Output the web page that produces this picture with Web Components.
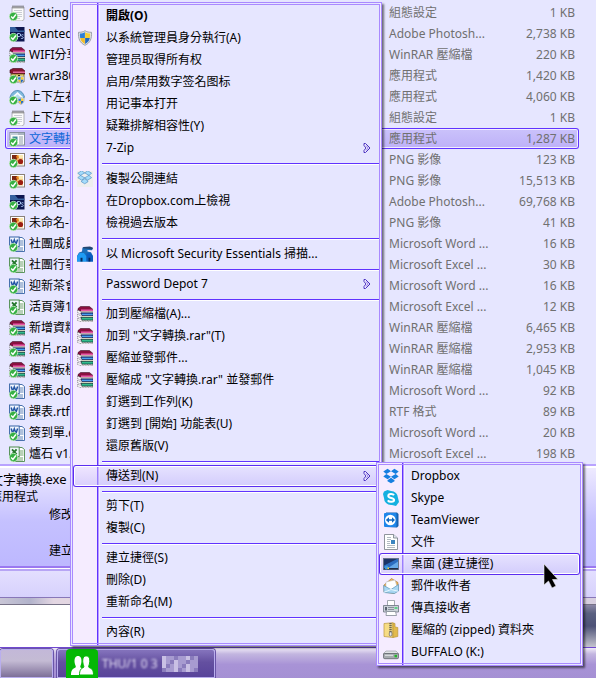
<!DOCTYPE html>
<html lang="zh-Hant">
<head>
<meta charset="utf-8">
<title>檔案總管</title>
<style>
html,body{margin:0;height:100%}
body{font:12px/22px "Noto Sans","Noto Sans CJK TC",sans-serif;color:#000;background:#e6e6ff;overflow:hidden;
--face:#e6e6ff;--edge:#a98aff;--line:#6033ff;--gutter:24px}
</style>
</head>
<body>
<desktop-screen></desktop-screen>
<script>
const TICK='<circle cx="4.500" cy="11.500" r="4.200" fill="#36b044" stroke="#d4f3d0" stroke-width=".7"/><path d="M2.200 11.600l1.700 1.800 3-3.900" fill="none" stroke="#fff" stroke-width="1.500"/>';
const RAR='<path d="M1 2.500L3.500.5h9l3.500 3v2H4L1 4z" fill="#8a0f40" stroke="#2a0614" stroke-width=".5"/><path d="M4 3.500h12v1.500H4z" fill="#e858a8"/><path d="M.5 4.200v2.300l3.500 1.600V5.600z" fill="#fff" stroke="#333" stroke-width=".5" stroke-dasharray="1 .6"/><path d="M4 5.400h12v1H4z" fill="#f0ecdc"/><path d="M4 6.800h12v3H5z" fill="#153a86" stroke="#08132c" stroke-width=".5"/><path d="M5 7.700h10.800v1.300H5z" fill="#4ba0f0"/><path d="M.5 8.300v2.300L4 12.200V9.800z" fill="#fff" stroke="#333" stroke-width=".5" stroke-dasharray="1 .6"/><path d="M4.500 10H16v1H4.500z" fill="#f5efd8"/><path d="M4 11.200h12v3.200H5z" fill="#0c6a54" stroke="#042019" stroke-width=".5"/><path d="M5 12.200h10.800v1.200H5z" fill="#3fd09c"/><path d="M.5 12.300v2l3.500 1.500h12v-1.200H5L4 13.700z" fill="#fff" stroke="#333" stroke-width=".5" stroke-dasharray="1 .6"/>';
const NOTE='<path d="M3 2h12v12.500L13 16H3z" fill="#fbfbfb" stroke="#a0a0a6" stroke-width=".8"/><path d="M3.500 2h11" stroke="#666" stroke-width="2.800" stroke-dasharray="1 1"/><path d="M5 5.500h8M5 7.500h8M5 9.500h8M5 11.500h8M5 13.500h6" stroke="#bcc0c9" stroke-width=".8"/>';
const doc=(c,l)=>`<path d="M4 1.500h9l2.500 2v12H4z" fill="#fff" stroke="${c}" stroke-width=".9"/><path d="M10.500 5h4M10.500 7h4M10.500 9h4M6 12h8M6 14h8" stroke="${c}" stroke-width=".8"/><rect x=".6" y="1" width="9.600" height="9.600" fill="#f2f7ff" stroke="${c}"/>${l}`;
const SHIELD='<path d="M8 .7C6.200 2 4 2.300 1.500 2.300c-.3 6 1 10.500 6.500 13 5.500-2.500 6.800-7 6.500-13C12 2.300 9.800 2 8 .7z" fill="#dfe3e8" stroke="#8a9198" stroke-width=".8"/><path d="M7.900 2.300C6.500 3.200 4.800 3.500 2.900 3.600c-.1 1.700 0 3.100.3 4.300h4.700z" fill="#2e7fd6"/><path d="M8.100 2.300c1.400.9 3.100 1.200 5 1.300.1 1.700 0 3.100-.3 4.300H8.100z" fill="#f8cf33"/><path d="M3.200 8.100h4.700v5.900C5.200 12.700 3.800 10.800 3.200 8.100z" fill="#f3bd28"/><path d="M12.800 8.100H8.100v5.900c2.700-1.300 4.100-3.200 4.700-5.900z" fill="#2469bd"/>';
const BOX=c=>`<path d="M4.600.8L.3 3.600l3 2.400L8 3.200zM11.400.8L8 3.200l4.700 2.800 3-2.400zM.3 8.500l4.300 2.800L8 8.700 3.300 6zM15.700 8.500l-4.300 2.800L8 8.700 12.700 6zM4.500 12.200v1L8 15.300l3.500-2.100v-1L8 9.700z" fill="${c}"/>`;
const ICONS={
rar:RAR,note:NOTE+TICK,shield:SHIELD,
rarT:RAR+TICK,
ps:'<path d="M1 1h14.500v14.500H4V9H1z" fill="#0d1650"/><path d="M1 1h5l3 3.500h6.500V6H1z" fill="#35609f"/><path d="M8.500 13V7.500h1.700a1.500 1.500 0 010 3H8.500M14.500 9c-1.500-.8-2.500 0-2.200.9.400.8 2 .8 2 1.700 0 1-1.300 1.200-2.400.7" fill="none" stroke="#a8c4f0" stroke-width="1"/>'+TICK,
setup:'<path d="M1 2l3-1.500h9L16 3v3H4L1 5z" fill="#86122f" stroke="#35040f" stroke-width=".6"/><path d="M4 3.500h12V5H4z" fill="#e0669a"/><path d="M2 6h13v8H6l-4-2z" fill="#e3cd6c" stroke="#5a4412" stroke-width=".7"/><path d="M5 7.500h2M9 7.500h2M6 9.500h3" stroke="#372d10"/><g transform="translate(7.500 7.500) scale(.53)">'+SHIELD+'</g>'+TICK,
app:'<path d="M1 8.500C2 4 5.500 1 9 1.500c3.500.3 5.500 3 6.500 6.500l-3.500 5H5z" fill="#7fb8dc" stroke="#4382ac" stroke-width=".8"/><path d="M3 8l5.500-5 5.500 5-2 4.500H5z" fill="#f7fbff"/><path d="M5.500 8l3-2.800 3 2.800v4h-6z" fill="#b7ddf3"/><g transform="translate(8 8) scale(.5)">'+SHIELD+'</g>'+TICK,
exe:'<rect x="1" y="1.500" width="14.500" height="12.500" fill="#fdfdfd" stroke="#7b8792" stroke-width=".9"/><path d="M1.500 2h13.500v2H1.500z" fill="#c3ced9"/><path d="M9.500 3h1M11.500 3h1M13.500 3h1" stroke="#5f6d79"/><rect x="3.500" y="5.500" width="5" height="5" fill="#3f8c94"/><path d="M10 6h4M10 8h4M10 10h4M10 12h4" stroke="#8c9ba8"/>'+TICK,
png:'<rect x="1.500" y="1.500" width="14" height="12.500" fill="#fff" stroke="#8a8178"/><rect x="3" y="3" width="11" height="9.500" fill="#f1c987"/><path d="M3 3h5v5H3z" fill="#7b2612"/><path d="M7 4l2-1 1 3-2 1zM4.500 9L8 7l2 4-3 1.500z" fill="#e9881f"/><circle cx="11.500" cy="9.500" r="2.600" fill="#9b1d12"/><path d="M10 3h4v3h-4z" fill="#f9e9b3"/>'+TICK,
word:doc('#3563a5','<path d="M2.200 3.500l1.400 4.700 1.700-4.400L7 8.200l1.600-4.700" fill="none" stroke="#2154a4" stroke-width="1.500"/>')+TICK,
excel:doc('#4c8a4d','<path d="M3 3.300l4.600 5M7.600 3.300L3 8.300" stroke="#25772d" stroke-width="1.900"/>')+TICK,
dbxOld:'<rect width="16" height="16" fill="#eeeeee"/><g stroke="#3b7fb8" stroke-width=".6" transform="translate(.5 -1) scale(.9)">'+BOX('#a5dcfa')+'</g>',
mse:'<path d="M0 15.500V10l2-3.500 3-1 .5-4 7-.5 3.500 1.300-1 2-4.500-.3v1.500l3.500.8L16 10v5.500z" fill="#1b6db8"/><path d="M5.800 2.300l.6-1.300 6.600-.5 3 1.200-1 1.800-3.800-.7z" fill="#24466f"/><path d="M0 10.500l2.500-3.500H7l2.500 3.500v5H0z" fill="#1f9bf4"/><path d="M9.500 7.500l4-.3 2.500 3.300v5H9.500z" fill="#0a5cc0"/><path d="M3.500 15.500v-3.700h2v3.700zM11.500 15.500v-3.700h1.800v3.700z" fill="#062a5c"/>',
dropbox:BOX('#167fe0'),
skype:'<path d="M1 1.500L4.500 0 8 1a7 7 0 017 7l1 4-3 4-4-1H8a7 7 0 01-7-7L0 4z" fill="#14b0e0"/><path d="M11 5.300C10 3.600 5.300 3.600 5.300 6c0 2.500 5.800 1.400 5.800 4 0 2.300-4.900 2.500-6.300.4" fill="none" stroke="#fff" stroke-width="2"/>',
team:'<path d="M3 .5h11l1.500 1.500v12L14 15.500 3 15z" fill="#1760b0"/><rect x="1" y="1" width="12.500" height="14" rx="1" fill="#1f86ea"/><circle cx="7.300" cy="8" r="5.300" fill="#fff"/><path d="M2.800 8L6 5.300v1.900h3V5.300L12 8l-3 2.700V8.800H6v1.900z" fill="#1268c0"/>',
file:'<path d="M1.500.5h9L14.500 4v11.500h-13z" fill="#fff" stroke="#757b84" stroke-width=".8"/><path d="M10.500.5V4h4" fill="#dfe5ee" stroke="#757b84" stroke-width=".8"/><path d="M4 3.500h4M4 5.500h4M4 7.500h3M4 9.500h3M4 11.500h8M4 13.500h8" stroke="#a0a8b2" stroke-width=".8"/><rect x="8" y="6" width="4" height="4" fill="#3c84c0"/>',
desk:'<path d="M0 2h16v12H0z" fill="#68748a"/><path d="M1 3h14v10H1z" fill="#2c6cc0"/><path d="M1 3h13L1 9.500z" fill="#1c3468"/><path d="M5 12l10-6.500V12z" fill="#66a8e8"/><path d="M1 12h14v1.500H1z" fill="#202c48"/><circle cx="3.500" cy="11.500" r="1.900" fill="#3d9ae0"/><path d="M4.500 11.500h1.500V13H4.500z" fill="#f2ce33"/>',
mail:'<path d="M1 7l7.500-6.500L15 4.500v8L11 15.500 1 14z" fill="#efb45a" stroke="#a2752d" stroke-width=".6"/><path d="M3 4l9-2 2 6.500-7 3.500-4-3z" fill="#fff" stroke="#b0b9c4" stroke-width=".5"/><path d="M.6 7.500L8 11.500l7.500-5V13l-4 2.500-10.500-1z" fill="#a9d7f2" stroke="#4d8eb9" stroke-width=".6"/><path d="M1 14.300L8 11.500l7 1.700" fill="none" stroke="#e8f7ff"/>',
fax:'<path d="M4.500.5h7V6h-7z" fill="#fff" stroke="#8d949c" stroke-width=".8"/><path d="M.5 5.500h15v6.500H.5z" fill="#ccd2d9" stroke="#6b747f" stroke-width=".8"/><path d="M2 7h2v3.500H2z" fill="#5a6370"/><path d="M5.500 7.500h1M7.500 7.500h1M9.500 7.500h1M5.500 9.500h1M7.500 9.500h1M9.500 9.500h1" stroke="#47515d" stroke-width="1.200"/><path d="M11.500 7h3v2h-3z" fill="#5fd088"/><path d="M3.500 11.500h9l1 4H3z" fill="#fff" stroke="#818994" stroke-width=".8"/>',
zip:'<path d="M1 1.500l9-.8V15.500l-9-1z" fill="#f6dc84" stroke="#ba963b" stroke-width=".7"/><path d="M10 1l2 .5v3.500l2.800.5v9L10 15.500z" fill="#e2ba4c" stroke="#ba963b" stroke-width=".7"/><path d="M7.500 1v10" stroke="#6c6656" stroke-width="2.400" stroke-dasharray="1.200 .8"/><rect x="6.300" y="10" width="2.600" height="4" rx="1" fill="#e8e8e8" stroke="#666" stroke-width=".7"/>',
drive:'<path d="M3 7h10l3 3H0z" fill="#dfe2e5" stroke="#91969b" stroke-width=".6"/><rect x=".4" y="9.500" width="15.200" height="5.200" rx="1.400" fill="#a6abaf" stroke="#5d6268" stroke-width=".8"/><path d="M2 11.300h8" stroke="#e4e6e8"/><rect x="11.500" y="10.800" width="2.500" height="2.500" fill="#22b629"/>'
};
const FILES=[
['note','Setting','組態設定','1'],['ps','Wanted','Adobe Photosh...','2,738'],['rarT','WIFI分享','WinRAR 壓縮檔','220'],
['setup','wrar380','應用程式','1,420'],['app','上下左右','應用程式','4,060'],['note','上下左右','組態設定','1'],
['exe','文字轉換','應用程式','1,287'],['png','未命名-1','PNG 影像','123'],['png','未命名-1','PNG 影像','15,513'],
['ps','未命名-1','Adobe Photosh...','69,768'],['png','未命名-1','PNG 影像','41'],['word','社團成員','Microsoft Word ...','16'],
['excel','社團行事','Microsoft Excel ...','30'],['word','迎新茶會','Microsoft Word ...','16'],['excel','活頁簿1','Microsoft Excel ...','12'],
['rarT','新增資料','WinRAR 壓縮檔','6,465'],['rarT','照片.rar','WinRAR 壓縮檔','2,953'],['rarT','複雜板模','WinRAR 壓縮檔','1,045'],
['word','課表.doc','Microsoft Word ...','92'],['word','課表.rtf','RTF 格式','89'],['word','簽到單.d','Microsoft Word ...','20'],
['excel','爐石 v1.','Microsoft Excel ...','198']];
const define=(name,html,init)=>{
 const t=document.createElement('template');t.innerHTML=html;
 customElements.define(name,class extends HTMLElement{
  connectedCallback(){
   if(this.shadowRoot)return;
   this.attachShadow({mode:'open'}).append(t.content.cloneNode(true));
   if(init)init.call(this,this.shadowRoot);
  }
 });
};
define('ui-icon','<style>:host{display:block;flex:none;width:16px;height:16px}svg{display:block;width:100%;height:100%}</style><svg viewBox="0 0 16 16" aria-hidden="true"></svg>',
 function(r){r.querySelector('svg').innerHTML=ICONS[this.getAttribute('name')]||''});

define('menu-item',`<style>
:host{display:block}
button{all:unset;box-sizing:border-box;display:grid;grid-template-columns:var(--gutter) 1fr 16px;column-gap:9px;align-items:center;width:100%;height:22px;white-space:nowrap;cursor:default}
:host([tall]) button{height:23px}
:host([bold]) button{font-weight:700}
:host([active]) button{border-radius:3px;box-shadow:inset 0 0 0 1px #5b2df0,inset 0 0 0 2px #fff;background:linear-gradient(#e9e0ff66,#c5bafa99)}
.icon{display:grid;justify-content:center}
svg{display:block;width:8px;height:12px}
</style><button type="button" role="menuitem"><span class="icon"></span><span><slot></slot></span><span class="tail"></span></button>`,
 function(r){
  const i=this.getAttribute('icon');
  if(i)r.querySelector('.icon').innerHTML=`<ui-icon name="${i}"></ui-icon>`;
  if(this.hasAttribute('sub'))r.querySelector('.tail').innerHTML='<svg viewBox="0 0 8 12"><path d="M1 1.500h1.500L7 6l-4.500 4.500H1V8.500L3 6 1 3.500z" fill="#f5f0ff" stroke="#4a32c0"/><path d="M3 3.500L5.200 6 3 8.500" fill="none" stroke="#8d78e6"/></svg>';
 });
define('menu-line','<style>:host{display:block;height:8px;padding-left:29px}hr{margin:0;border:0;padding-top:4px;border-bottom:1px solid var(--line);box-shadow:0 1px #fff}</style><hr>');
define('context-menu',`<style>
:host{display:block;box-sizing:border-box;border:3px double var(--edge);box-shadow:2px 2px 2px #0008;
background:linear-gradient(90deg,#f5ecff var(--gutter),var(--line) 0 calc(var(--gutter) + 1px),#b79bff 0 calc(var(--gutter) + 2px),#f4f0ff 0 calc(var(--gutter) + 3px),var(--face) 0)}
</style><div role="menu"><slot></slot></div>`);
define('file-list',`<style>
:host{display:block;padding:2px 17px 0 5px;background:var(--face)}
table,tbody{display:block}
tr{display:grid;grid-template-columns:380px 110px 1fr;box-sizing:border-box;height:21px;line-height:21px;align-items:center;color:#707070;white-space:nowrap}
td{padding:0 4px}
td:first-child{display:flex;gap:4px;align-items:center;color:#000}
td:last-child{text-align:right}
.on{border-radius:3px;background:linear-gradient(#cbc3fb,#bdb0f8);box-shadow:inset 0 0 0 1px #6033ff,inset 0 0 0 2px #f1edff}
.on td:first-child{color:#0a66d8}
</style><table><tbody></tbody></table>`,
 r=>{r.querySelector('tbody').innerHTML=FILES.map((f,i)=>`<tr${i===6?' class="on"':''}><td><ui-icon name="${f[0]}"></ui-icon><span>${f[1]}</span></td><td>${f[2]}</td><td>${f[3]} KB</td></tr>`).join('')});
define('details-pane',`<style>
:host{display:block;margin-left:-10px;border-top:2px solid #b9a3ff;background:linear-gradient(#fff 2px,#eeeaff 2px,#c5c1ff 55%,#bdb8ff);border-bottom:2px solid #9a78f0}
dl{margin:0;padding:4px 0 6px;display:grid;grid-template-columns:59px 1fr;grid-auto-rows:18px;line-height:18px}
dt,dd{margin:0}
.name{grid-column:1/-1;font-size:13px}.kind{grid-column:1/-1}
dt{grid-column:2}.made{grid-row:5}
</style><dl><dd class="name">文字轉換.exe</dd><dd class="kind">應用程式</dd><dt>修改</dt><dt class="made">建立</dt></dl>`);
define('task-bar',`<style>
:host{display:flex;gap:4px;height:31px;box-sizing:border-box;border-top:1px solid #7048d0;padding-top:1px;background:linear-gradient(#f0ebf8,#c3b6e0 20%,#a893d6 55%,#a590d4)}
button{all:unset;box-sizing:border-box;border:1px solid #b9aeee;border-radius:3px 3px 0 0;box-shadow:0 0 0 1px #6a55a8}
.idle{width:53px;background:linear-gradient(#c3b8d8,#c4bbd4 40%,#7d6f98)}
.live{display:flex;align-items:center;gap:4px;width:158px;padding-left:8px;background:linear-gradient(#8574bd,#6450a0 45%,#58439a);color:#e6e0f6}
svg{display:block;flex:none}
.blur{filter:blur(1px)}
.mosaic{display:grid;grid-template-columns:repeat(9,4px);grid-auto-rows:4px}
.mosaic i{background:#a79bd0}.mosaic i:nth-child(3n+1){background:#c9c0e4}.mosaic i:nth-child(4n){background:#8a7cbc}
</style><button type="button" class="idle" aria-label="視窗"></button><button type="button" class="live"><svg width="32" height="29" viewBox="0 0 32 29"><path d="M0 29V4a4 4 0 014-4h24a4 4 0 014 4v25z" fill="#05b805"/><path d="M5 26c0-5 2-6.500 4.500-7.500C10.500 18 9 16 8.700 14 8 9.500 9.500 7 12 7c2.600 0 4 2.500 3.300 7-.3 2-1.600 4-.8 4.500 3 1 4 3 4 7.500z" fill="#fff"/><path d="M13.500 26c0-5 1.500-6.500 4-7.500 1-.5-.3-2.500-.6-4.500-.7-4.500.6-7 3.400-7s4 2.500 3.300 7c-.3 2-1.600 4-.6 4.500 3 1 4.500 2.500 4.500 7.500z" fill="#fff" stroke="#05b805"/></svg><span class="blur">THU/1 0 3</span><span class="mosaic"></span></button>`,
 r=>{r.querySelector('.mosaic').innerHTML='<i></i>'.repeat(36)});
define('desktop-screen',`<style>
:host{display:flex;flex-direction:column;position:relative;min-height:100vh;overflow:hidden}
.status{height:30px;box-sizing:border-box;border-top:1px solid #fff;box-shadow:inset 0 2px #b7a5f5;background:linear-gradient(#e4e0ff,#d6d1fc);border-bottom:1px solid #8877b8}
.strip{height:7px;background:linear-gradient(90deg,#c9c6d6,#b2b3cb 5%,#e3d6e2 9%,#d8cfe0);border-bottom:1px solid #777287;box-sizing:border-box}
.back{flex:1;display:grid;grid-template-columns:1fr 24px}
.back i{background:#fff}.back i+i{background:linear-gradient(#8b87a5,#5a6080 20%,#4d5277 50%,#c5c4cf)}
.main{position:absolute;left:70px;top:2px;width:312px}
.sub{position:absolute;left:376px;top:462px;width:207px;--gutter:23px}
.pointer{position:absolute;left:543px;top:562px}
</style>
<file-list></file-list><details-pane></details-pane><div class="status"></div><div class="strip"></div><div class="back"><i></i><i></i></div><task-bar></task-bar>
<context-menu class="main">
<menu-item bold>開啟(O)</menu-item><menu-item icon="shield">以系統管理員身分執行(A)</menu-item><menu-item>管理员取得所有权</menu-item><menu-item>启用/禁用数字签名图标</menu-item><menu-item>用记事本打开</menu-item><menu-item>疑難排解相容性(Y)</menu-item><menu-item sub>7-Zip</menu-item><menu-line></menu-line>
<menu-item tall icon="dbxOld">複製公開連結</menu-item><menu-item>在Dropbox.com上檢視</menu-item><menu-item>檢視過去版本</menu-item><menu-line></menu-line>
<menu-item tall icon="mse">以 Microsoft Security Essentials 掃描...</menu-item><menu-line></menu-line>
<menu-item sub>Password Depot 7</menu-item><menu-line></menu-line>
<menu-item icon="rar">加到壓縮檔(A)...</menu-item><menu-item icon="rar">加到 "文字轉換.rar"(T)</menu-item><menu-item icon="rar">壓縮並發郵件...</menu-item><menu-item icon="rar">壓縮成 "文字轉換.rar" 並發郵件</menu-item><menu-item>釘選到工作列(K)</menu-item><menu-item>釘選到 [開始] 功能表(U)</menu-item><menu-item>還原舊版(V)</menu-item><menu-line></menu-line>
<menu-item active sub>傳送到(N)</menu-item><menu-line></menu-line>
<menu-item>剪下(T)</menu-item><menu-item>複製(C)</menu-item><menu-line></menu-line>
<menu-item>建立捷徑(S)</menu-item><menu-item>刪除(D)</menu-item><menu-item>重新命名(M)</menu-item><menu-line></menu-line>
<menu-item>內容(R)</menu-item>
</context-menu>
<context-menu class="sub">
<menu-item icon="dropbox">Dropbox</menu-item><menu-item icon="skype">Skype</menu-item><menu-item icon="team">TeamViewer</menu-item><menu-item icon="file">文件</menu-item><menu-item active icon="desk">桌面 (建立捷徑)</menu-item><menu-item icon="mail">郵件收件者</menu-item><menu-item icon="fax">傳真接收者</menu-item><menu-item icon="zip">壓縮的 (zipped) 資料夾</menu-item><menu-item icon="drive">BUFFALO (K:)</menu-item>
</context-menu>
<svg class="pointer" width="18" height="27" viewBox="0 0 18 27"><path d="M1 2v21l4.500-4 3.500 7 4-2-3.500-6.500H15z" fill="#000" stroke="#eee" stroke-width=".6"/></svg>`);
</script>
</body>
</html>
